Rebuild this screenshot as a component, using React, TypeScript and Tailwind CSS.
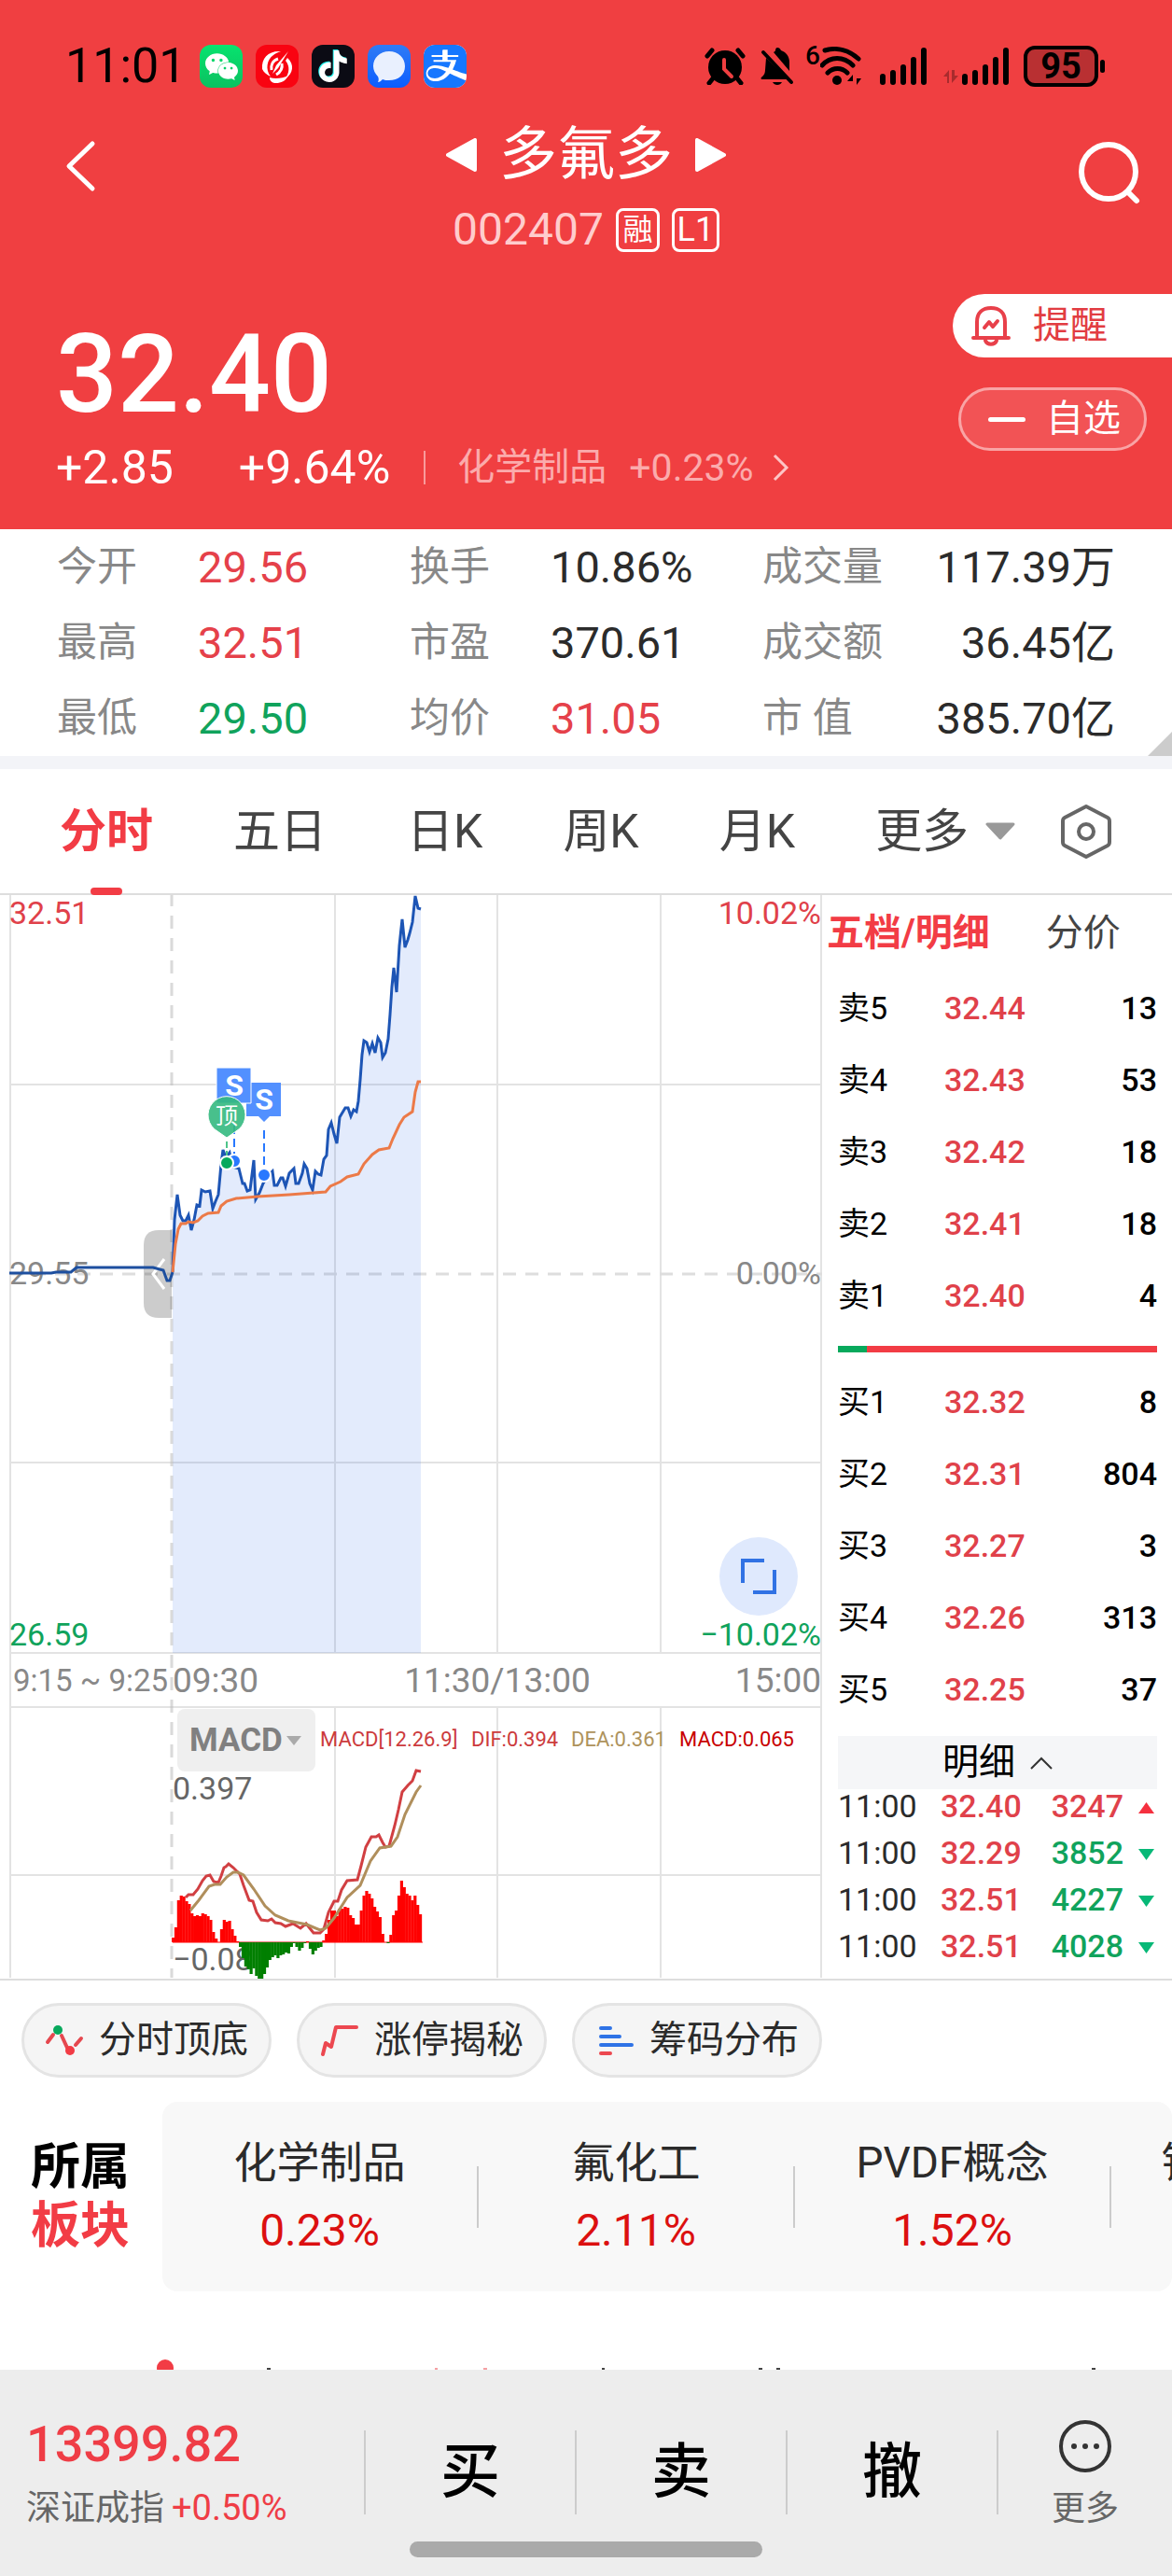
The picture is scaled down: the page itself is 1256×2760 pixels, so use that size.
import type { ReactNode } from 'react';
import { SiAlipay, SiTiktok, SiWechat } from 'react-icons/si';

const stats = [
  { label: '今开', value: '29.56', color: 'text-[#e5414a]' },
  { label: '换手', value: '10.86%', color: 'text-[#2b2b2b]' },
  { label: '成交量', value: '117.39万', color: 'text-[#2b2b2b]' },
  { label: '最高', value: '32.51', color: 'text-[#e5414a]' },
  { label: '市盈', value: '370.61', color: 'text-[#2b2b2b]' },
  { label: '成交额', value: '36.45亿', color: 'text-[#2b2b2b]' },
  { label: '最低', value: '29.50', color: 'text-[#10a35c]' },
  { label: '均价', value: '31.05', color: 'text-[#e5414a]' },
  { label: '市 值', value: '385.70亿', color: 'text-[#2b2b2b]' },
];

const tabs = ['分时', '五日', '日K', '周K', '月K'];

const asks = [
  ['卖5', '32.44', '13'],
  ['卖4', '32.43', '53'],
  ['卖3', '32.42', '18'],
  ['卖2', '32.41', '18'],
  ['卖1', '32.40', '4'],
];

const bids = [
  ['买1', '32.32', '8'],
  ['买2', '32.31', '804'],
  ['买3', '32.27', '3'],
  ['买4', '32.26', '313'],
  ['买5', '32.25', '37'],
];

const trades = [
  { time: '11:00', price: '32.40', volume: '3247', up: true },
  { time: '11:00', price: '32.29', volume: '3852', up: false },
  { time: '11:00', price: '32.51', volume: '4227', up: false },
  { time: '11:00', price: '32.51', volume: '4028', up: false },
];

const sectors = [
  { name: '化学制品', change: '0.23%' },
  { name: '氟化工', change: '2.11%' },
  { name: 'PVDF概念', change: '1.52%' },
  { name: '锂电池概念', change: '' },
];

const preMarket = '10,407 55,407 60,406 76,406 82,401 164,401 175,404 179,415 182,415 185,406';

const priceLine =
  '185,406 187,350 190,323 193,345 196,351 199,351 202,345 205,361 208,350 211,334 214,335 216,318 220,320 225,319 ' +
  '228,338 231,330 234,323 237,290 239,275 242,283 246,278 249,293 256,295 260,311 262,311 265,319 268,318 272,286 ' +
  '274,328 278,321 282,311 287,303 292,298 294,313 297,313 301,305 303,305 306,314 310,300 315,295 317,311 320,311 ' +
  '324,300 326,290 329,295 332,311 335,318 338,298 341,301 344,302 347,285 350,281 352,253 355,246 358,258 361,268 ' +
  '364,240 367,235 370,230 373,230 376,239 379,232 382,234 384,223 386,200 388,173 390,158 393,160 396,170 399,161 ' +
  '402,171 405,155 408,160 410,176 413,171 416,156 418,130 420,100 422,80 425,106 428,56 431,28 434,58 437,50 439,43 ' +
  '442,31 445,3 448,16 451,17';

const averageLine =
  '185,406 188,376 191,360 194,354 199,354 202,352 207,353 212,351 217,346 223,343 234,342 237,335 243,330 253,327 ' +
  '276,325 310,323 349,320 354,314 365,309 372,304 384,301 390,290 399,280 406,275 417,273 421,263 428,248 433,240 ' +
  '442,234 445,213 448,202 451,202';

const difLine =
  '199,1076 202,1073 207,1073 212,1067 217,1058 221,1053 225,1052 229,1059 234,1060 237,1053 240,1044 242,1043 ' +
  '245,1040 250,1044 257,1051 261,1063 267,1079 271,1080 275,1092 280,1100 287,1101 291,1099 295,1103 301,1104 ' +
  '306,1107 314,1104 322,1109 328,1104 332,1109 336,1114 343,1114 347,1110 352,1092 358,1080 362,1080 366,1068 ' +
  '372,1058 383,1057 387,1042 392,1022 398,1011 403,1011 406,1009 410,1017 413,1022 417,1021 423,999 427,982 ' +
  '431,963 437,956 442,951 446,940 451,941';

const deaLine =
  '204,1090 213,1079 224,1064 230,1062 236,1062 243,1054 250,1049 255,1049 261,1052 272,1067 284,1085 295,1095 ' +
  '309,1101 329,1105 343,1111 349,1109 358,1098 372,1076 386,1063 397,1037 407,1023 419,1021 426,1011 434,987 ' +
  '446,963 451,956';

const macdBars = [
  5, 16, 45, 50, 49, 44, 41, 31, 28, 29, 28, 31, 30, 28, 24, 11, 4, 0, 14, 24, 22, 23, 14, 7, 1, -5, -17, -26, -29,
  -34, -28, -36, -39, -39, -34, -27, -19, -16, -14, -17, -14, -13, -11, -12, -5, -1, -5, -9, -6, -1, 1, -7, -13, -9,
  -6, -5, 2, 9, 24, 34, 34, 28, 36, 36, 38, 37, 29, 26, 19, 19, 34, 50, 55, 52, 47, 38, 33, 27, 9, 0, -1, 8, 29, 34,
  50, 66, 59, 52, 50, 45, 50, 40, 30,
];

function AppIcon({ className, children }: { className: string; children: ReactNode }) {
  return (
    <span className={`flex h-[46px] w-[46px] items-center justify-center overflow-hidden rounded-xl ${className}`}>
      {children}
    </span>
  );
}

function Signal() {
  return (
    <svg width="50" height="40" viewBox="0 0 50 40" stroke="#000" strokeWidth="6" strokeLinecap="round">
      <path d="M3 31v6M14 27v10M25 21v16M36 13v24M47 3v34" />
    </svg>
  );
}

function StatusBar() {
  return (
    <div className="flex items-center justify-between pl-[70px] pr-[72px] pt-12">
      <div className="flex h-[46px] items-center gap-[14px]">
        <span className="w-[130px] text-[52px] leading-none text-black">11:01</span>
        <AppIcon className="bg-gradient-to-b from-[#07e36f] to-[#0ac160]">
          <SiWechat size={35} />
        </AppIcon>
        <AppIcon className="bg-[#f90311]">
          <svg width="46" height="46" viewBox="0 0 46 46" fill="#fff">
            <path d="M27 7C14 6 6 14 7 26c2 4 5 6 9 8-6-8-4-18 3-23 2-2 5-3 8-4z" />
            <path d="M34 14c8 7 6 17-2 22 4-6 5-13 0-19z" />
            <path d="M15 35c6 2 14 1 20-2-3 6-8 8-13 8-4 0-7-2-7-6z" />
            <path d="M35 7 24 25l-6 6 4-9z" />
            <path d="M24 15c-6 2-8 7-7 12M28 20c1 5-1 9-6 12" fill="none" stroke="#fff" strokeWidth="3" />
          </svg>
        </AppIcon>
        <AppIcon className="bg-[#0b0b14]">
          <SiTiktok size={34} className="drop-shadow-[-1px_-1px_0_#25f4ee]" />
        </AppIcon>
        <AppIcon className="bg-gradient-to-b from-[#2f7bf5] to-[#0a5cff]">
          <svg width="46" height="46" viewBox="0 0 46 46">
            <path d="M23 7c10 0 17 7 17 16s-7 15-17 15c-3 0-5 0-7-1-2 2-3 3-5 3 1-2 1-4 0-6-3-3-5-7-5-11C6 14 13 7 23 7z" fill="#e9f0fe" />
          </svg>
        </AppIcon>
        <AppIcon className="bg-white text-[#1677ff]">
          <SiAlipay size={48} className="shrink-0" />
        </AppIcon>
      </div>

      <div className="flex h-[46px] items-center">
        <svg width="44" height="40" viewBox="0 0 44 40" fill="none" stroke="#000" strokeLinecap="round">
          <circle cx="22" cy="21" r="18" fill="#000" stroke="none" />
          <path d="M3 9l5-6M41 9l-5-6" strokeWidth="5" />
          <path d="M9 33l-4 5M35 33l4 5" strokeWidth="5" />
          <path d="M21 13v10l8 8" stroke="#f03f41" strokeWidth="4" />
        </svg>
        <svg className="ml-4" width="36" height="42" viewBox="0 0 36 42">
          <path d="M18 1c2 0 3 1 4 3 6 2 9 7 9 13v9L14 6c1-1 2-1 2-2 0-2 1-3 2-3zM6 12l23 23H2c-2 0-2-2 0-3 2-2 3-4 3-7z" />
          <path d="M13 38h10c-2 4-8 4-10 0z" />
          <path d="M3 6l30 32" stroke="#000" strokeWidth="4" strokeLinecap="round" />
        </svg>
        <span className="ml-3 self-start text-[28px] font-medium leading-6 text-black">6</span>
        <svg width="46" height="42" viewBox="0 0 46 42" fill="none" stroke="#000" strokeWidth="5" strokeLinecap="round">
          <path d="M5 4c13-4 26 0 36 9M2 20c9-10 23-10 33 0M8 28c6-6 15-6 21 0" />
          <circle cx="18" cy="36" r="5" fill="#000" stroke="none" />
          <path d="M35 41V30l-6 7h6M39 30v11l5-7h-5" fill="#000" stroke="none" />
        </svg>
        <span className="ml-[18px]">
          <Signal />
        </span>
        <svg className="ml-[18px] self-end" width="16" height="20" viewBox="0 0 16 20" fill="#a92b2d">
          <path d="M6 15V1L0 8h4v7zM9 1v14l7-8h-4V1z" />
        </svg>
        <span className="ml-1">
          <Signal />
        </span>
        <span className="ml-4 flex h-11 w-[80px] items-center justify-center rounded-xl border-4 border-black bg-[#b93032] text-[38px] font-bold leading-none text-black">
          95
        </span>
        <span className="ml-[2px] h-[14px] w-[5px] rounded-full bg-black"></span>
      </div>
    </div>
  );
}

function Header() {
  return (
    <header className="bg-[#f03f41] pb-9 text-white">
      <StatusBar />

      <div className="mt-8 grid grid-cols-[1fr_auto_1fr]">
        <button aria-label="返回" className="ml-[68px] mt-6 justify-self-start self-start">
          <svg width="36" height="56" viewBox="0 0 36 56" fill="none" stroke="#fff" strokeWidth="5" strokeLinecap="round" strokeLinejoin="round">
            <path d="M31 4 6 28l25 24" />
          </svg>
        </button>
        <div className="flex flex-col items-center">
          <div className="flex h-20 items-center gap-6">
            <button aria-label="上一只">
              <svg width="33" height="36" viewBox="0 0 33 36" fill="#fff" stroke="#fff" strokeWidth="4" strokeLinejoin="round">
                <path d="M31 2v32L2 18z" />
              </svg>
            </button>
            <h1 className="text-[62px] leading-none">多氟多</h1>
            <button aria-label="下一只">
              <svg width="33" height="36" viewBox="0 0 33 36" fill="#fff" stroke="#fff" strokeWidth="4" strokeLinejoin="round">
                <path d="M2 2v32l29-16z" />
              </svg>
            </button>
          </div>
          <div className="mt-[10px] flex h-[60px] items-center gap-[13px] text-[32px] leading-none">
            <span className="text-[48px] text-[#ffcccd]">002407</span>
            <span className="flex h-[47px] w-[47px] items-center justify-center rounded-lg border-[3px]">融</span>
            <span className="flex h-[47px] w-[51px] items-center justify-center rounded-lg border-[3px] text-[36px]">L1</span>
          </div>
        </div>
        <button aria-label="搜索" className="mr-[33px] mt-6 justify-self-end self-start">
          <svg width="68" height="70" viewBox="0 0 68 70" fill="none" stroke="#fff" strokeWidth="6" strokeLinecap="round">
            <circle cx="33" cy="34" r="29" />
            <path d="M54 56l9 9" />
          </svg>
        </button>
      </div>

      <div className="mt-[39px] flex justify-between">
        <div className="pt-7">
          <p className="pl-[60px] text-[116px] font-medium leading-none">32.40</p>
          <div className="mt-3 flex h-[60px] items-center pl-[60px] text-[50px] leading-none">
            <span>+2.85</span>
            <span className="ml-[70px]">+9.64%</span>
            <span className="ml-9 h-9 w-[2px] bg-[#f99a9b]"></span>
            <a href="#sector" className="ml-[34px] flex items-center text-[40px] text-[#fbabac]">
              化学制品<span className="ml-6 text-[41px]">+0.23%</span>
              <svg className="ml-5" width="18" height="32" viewBox="0 0 18 32" fill="none" stroke="#fdc5c6" strokeWidth="3">
                <path d="M2 3l13 13L2 29" />
              </svg>
            </a>
          </div>
        </div>
        <div className="flex flex-col items-end gap-8 text-[40px] leading-none">
          <button className="flex h-[68px] w-[235px] items-center gap-6 rounded-l-full bg-white pl-5 text-[#e23c42]">
            <svg width="42" height="44" viewBox="0 0 42 44" fill="none" stroke="#e8404a" strokeWidth="4" strokeLinecap="round" strokeLinejoin="round">
              <path d="M6 34V18C6 8 12 3 21 3s15 5 15 15v16M2 35h38" />
              <path d="M15 38c2 5 10 5 12 0M14 24l5-6 4 5 5-6" />
            </svg>
            提醒
          </button>
          <button className="mr-[27px] flex h-[68px] w-[202px] items-center justify-between rounded-full border-[3px] border-[#f9a4a5] bg-[#f25355] pl-[29px] pr-[25px]">
            <span className="h-[5px] w-10 rounded-full bg-white"></span>
            自选
          </button>
        </div>
      </div>
    </header>
  );
}

function Stats() {
  return (
    <section className="relative border-b-[14px] border-[#f3f4f8] bg-white px-[61px]">
      <dl className="grid grid-cols-3">
        {stats.map((stat, index) => (
          <div key={stat.label} className="flex h-[81px] items-center leading-none">
            <dt className="w-[151px] shrink-0 text-[43px] text-[#888]">{stat.label}</dt>
            <dd className={`text-[47px] ${stat.color} ${index % 3 === 2 ? 'ml-auto' : ''}`}>{stat.value}</dd>
          </div>
        ))}
      </dl>
      <svg className="absolute bottom-0 right-0" width="26" height="26" viewBox="0 0 26 26">
        <path d="M26 0v26H0z" fill="#ccc" />
      </svg>
    </section>
  );
}

function PeriodTabs() {
  return (
    <nav className="flex h-[133px] items-center gap-[86px] bg-white px-16 text-[50px] leading-none text-[#444]">
      {tabs.map((tab, index) => (
        <button
          key={tab}
          className={`relative h-full shrink-0 ${index === 0 ? 'font-bold text-[#f23c45]' : ''}`}
        >
          {tab}
          {index === 0 && <span className="absolute -bottom-[2px] left-1/2 z-10 h-2 w-[34px] -translate-x-1/2 rounded-full bg-[#f23c45]"></span>}
        </button>
      ))}
      <button className="flex shrink-0 items-center gap-[18px]">
        更多
        <svg width="32" height="20" viewBox="0 0 32 20" fill="#999" stroke="#999" strokeWidth="3" strokeLinejoin="round">
          <path d="M2 2h28L16 17z" />
        </svg>
      </button>
      <button aria-label="设置" className="-ml-[38px]">
        <svg width="56" height="60" viewBox="0 0 56 60" fill="none" stroke="#666" strokeWidth="4" strokeLinejoin="round">
          <path d="M28 3 51 15q2 1 2 4v22q0 3-2 4L28 57 5 45q-2-1-2-4V19q0-3 2-4z" />
          <circle cx="28" cy="30" r="8" />
        </svg>
      </button>
    </nav>
  );
}

function Chart() {
  return (
    <div className="relative min-w-0 flex-1">
      <svg className="block h-auto w-full" viewBox="0 2 881 1161" fontSize="34" fill="none">
        <g stroke="#e3e3e3" strokeWidth="2">
          <path d="M11 0v1162M359 0v814M533 0v814M708 0v814M880 0v1162" />
          <path d="M359 872v290M533 872v290M708 872v290" />
          <path d="M11 205h870M11 610h870M11 814h870M11 872h870M11 1052h870" />
        </g>
        <path d="M11 408h870" stroke="#ddd" strokeWidth="3" strokeDasharray="14 10" />
        <polygon points={`${priceLine} 451,814 185,814`} fill="#2563eb" fillOpacity="0.13" />
        <path d="M184 0v1162" stroke="#bbb" strokeOpacity="0.55" strokeWidth="3" strokeDasharray="14 10" />

        <g fill="#888">
          <text x="10" y="419">29.55</text>
          <text x="880" y="419" textAnchor="end">0.00%</text>
          <text x="14" y="855" fontSize="33">9:15 ~ 9:25</text>
          <text x="185" y="856" fontSize="37">09:30</text>
          <text x="533" y="856" fontSize="37" textAnchor="middle">11:30/13:00</text>
          <text x="880" y="856" fontSize="37" textAnchor="end">15:00</text>
        </g>
        <g fill="#e0414a">
          <text x="10" y="33">32.51</text>
          <text x="880" y="33" textAnchor="end">10.02%</text>
        </g>
        <g fill="#10a35c">
          <text x="10" y="806">26.59</text>
          <text x="880" y="806" textAnchor="end">−10.02%</text>
        </g>

        <path d="M184 361h-14q-16 0-16 16v62q0 16 16 16h14z" fill="#000" fillOpacity="0.2" />
        <path d="M176 392l-12 16 12 16" stroke="#fff" strokeWidth="3" />
        <polyline points={preMarket} stroke="#1d4f9f" strokeWidth="3" />
        <polyline points={priceLine} stroke="#1d55b5" strokeWidth="3" />
        <polyline points={averageLine} stroke="#ec7a48" strokeWidth="3" />

        {/* trade signals */}
        <path d="M251 249v34M283 254v40" stroke="#2878ff" strokeWidth="2" strokeDasharray="9 5" />
        <path d="M243 266v20" stroke="#4ec48a" strokeWidth="2" strokeDasharray="7 3" />
        <g stroke="#fff" strokeWidth="2">
          <circle cx="251" cy="287" r="7" fill="#2878ff" />
          <circle cx="283" cy="302" r="7" fill="#2878ff" />
          <circle cx="243" cy="289" r="7" fill="#07a95c" />
        </g>
        <path d="M264 203h37v36h-12l-6 6-6-6h-13z" fill="#5290ff" />
        <path d="M232 187h37v38h-37z" fill="#5290ff" stroke="#fff" />
        <path d="M243 262l-10-7a20 20 0 1 1 20 0z" fill="#34b97f" fillOpacity="0.9" stroke="#fff" />
        <g fill="#fff" textAnchor="middle">
          <text x="251" y="217" fontSize="32" fontWeight="700">S</text>
          <text x="283" y="232" fontSize="32" fontWeight="700">S</text>
          <text x="243" y="247" fontSize="24">顶</text>
        </g>

        {/* MACD */}
        <g fontSize="22">
          <text x="343" y="914" fill="#cc3b3d">MACD[12.26.9]</text>
          <text x="505" y="914" fill="#cc3b3d">DIF:0.394</text>
          <text x="612" y="914" fill="#ae935c">DEA:0.361</text>
          <text x="728" y="914" fill="#c80000">MACD:0.065</text>
        </g>
        <g fill="#666">
          <text x="185" y="971">0.397</text>
          <text x="185" y="1154">−0.08</text>
        </g>
        <path d="M185 1124h268" stroke="#f00" strokeWidth="1" />
        {macdBars.map((value, index) => (
          <rect
            key={index}
            x={184 + index * 2.88}
            y={value > 0 ? 1124 - value : 1124}
            width="3.2"
            height={Math.abs(value)}
            fill={value > 0 ? '#ff0000' : '#007f00'}
          />
        ))}
        <polyline points={difLine} stroke="#d13f42" strokeWidth="3" />
        <polyline points={deaLine} stroke="#b08f5c" strokeWidth="3" />
      </svg>

      <label className="absolute left-[190px] top-[872px] flex h-[67px] w-[148px] items-center rounded-lg bg-[#efefef]">
        <select aria-label="指标" className="w-full appearance-none pl-[13px] text-[35px] font-bold leading-none text-[#808080]">
          <option>MACD</option>
        </select>
        <svg className="pointer-events-none absolute right-[15px]" width="16" height="10" viewBox="0 0 16 10">
          <path d="M0 0h16L8 10z" fill="#aaa" />
        </svg>
      </label>
      <button
        aria-label="全屏"
        className="absolute right-[26px] top-[688px] flex h-[84px] w-[84px] items-center justify-center rounded-full bg-[#dfe9fd]"
      >
        <svg width="40" height="40" viewBox="0 0 40 40" fill="none" stroke="#3172e4" strokeWidth="4">
          <path d="M3 27V3h23M37 13v24H14" />
        </svg>
      </button>
    </div>
  );
}

function Book({ rows }: { rows: string[][] }) {
  return (
    <table className="w-full text-[34px] leading-none text-black">
      <tbody>
        {rows.map(([side, price, amount]) => (
          <tr key={side} className="h-[77px]">
            <td className="w-[114px] p-0">{side}</td>
            <td className="p-0 font-medium text-[#e0414a]">{price}</td>
            <td className="p-0 text-right font-medium">{amount}</td>
          </tr>
        ))}
      </tbody>
    </table>
  );
}

function OrderPanel() {
  return (
    <aside className="w-[375px] shrink-0 pl-[17px] pr-4">
      <div className="-ml-3 flex h-[82px] items-center text-[40px] leading-none">
        <button className="font-bold text-[#f23c45]">五档/明细</button>
        <button className="ml-[60px] text-[#444]">分价</button>
      </div>
      <Book rows={asks} />
      <div className="mb-[14px] mt-4 flex h-[7px] bg-[#f23c45]">
        <span className="w-[9%] bg-[#07a95c]"></span>
      </div>
      <Book rows={bids} />
      <button className="mt-3 flex h-[57px] w-full items-center justify-center gap-4 bg-[#f5f6f8] text-[39px] leading-none text-black">
        明细
        <svg width="24" height="14" viewBox="0 0 24 14" fill="none" stroke="#333" strokeWidth="2">
          <path d="M1 13 12 2l11 11" />
        </svg>
      </button>
      <table className="w-full text-[34px] leading-9">
        <tbody>
          {trades.map((trade, index) => (
            <tr key={index} className="h-[50px] align-top">
              <td className="w-[110px] p-0 text-[#2b2b2b]">{trade.time}</td>
              <td className="p-0 font-medium text-[#e0414a]">{trade.price}</td>
              <td className={`p-0 text-right font-medium ${trade.up ? 'text-[#e0414a]' : 'text-[#10a35c]'}`}>{trade.volume}</td>
              <td className="w-[36px] p-0">
                <svg className="ml-auto mr-[3px] mt-[14px]" width="17" height="12" viewBox="0 0 17 12">
                  {trade.up ? <path d="M0 12h17L8.500 0z" fill="#f5303f" /> : <path d="M0 0h17L8.500 12z" fill="#07b877" />}
                </svg>
              </td>
            </tr>
          ))}
        </tbody>
      </table>
    </aside>
  );
}

function Tools() {
  return (
    <div className="flex gap-[27px] px-[23px] pt-6 text-[40px] leading-none text-[#2b2b2b]">
      <button className="flex h-20 w-[268px] items-center justify-center gap-4 rounded-full border-[3px] border-[#e4e4e4] bg-[#f5f5f5]">
        <svg width="42" height="34" viewBox="0 0 42 34" fill="none" strokeLinecap="round">
          <path d="M3 19l6-8M18 12l6 13M33 22l6-7" stroke="#e5484f" strokeWidth="4" />
          <circle cx="14" cy="6" r="5" fill="#07a95c" />
          <circle cx="27" cy="28" r="5" fill="#f23c45" />
        </svg>
        分时顶底
      </button>
      <button className="flex h-20 w-[268px] items-center justify-center gap-4 rounded-full border-[3px] border-[#e4e4e4] bg-[#f5f5f5]">
        <svg width="42" height="34" viewBox="0 0 42 34" fill="none" stroke="#ec4850" strokeWidth="4" strokeLinecap="round" strokeLinejoin="round">
          <path d="M3 32 6 20l6 4 5-21h22" />
        </svg>
        涨停揭秘
      </button>
      <button className="flex h-20 w-[268px] items-center justify-center gap-4 rounded-full border-[3px] border-[#e4e4e4] bg-[#f5f5f5]">
        <svg width="42" height="34" viewBox="0 0 42 34" stroke="#2f73e6" strokeWidth="4" strokeLinecap="round">
          <path d="M6 4h10M6 13h20M6 22h33" />
          <path d="M6 31h10" stroke="#ec4850" />
        </svg>
        筹码分布
      </button>
    </div>
  );
}

function Sectors() {
  return (
    <section id="sector" className="mt-[26px] flex items-center overflow-hidden">
      <h2 className="w-[174px] shrink-0 pl-[33px] text-[53px] font-bold leading-[63px] text-black">
        所属
        <br />
        <span className="text-[#f23c45]">板块</span>
      </h2>
      <ul className="flex h-[203px] min-w-0 flex-1 items-center overflow-hidden rounded-2xl bg-[#f8f8f8]">
        {sectors.map((sector) => (
          <li key={sector.name} className="flex w-[339px] shrink-0 items-center leading-none">
            <a href="#sector" className="flex h-[120px] flex-1 flex-col items-center gap-[26px]">
              <span className="whitespace-nowrap text-[46px] text-[#2b2b2b]">{sector.name}</span>
              <span className="text-[48px] text-[#dc1010]">{sector.change}</span>
            </a>
            <span className="h-[66px] w-[2px] bg-[#ccc]"></span>
          </li>
        ))}
      </ul>
    </section>
  );
}

function BottomBar() {
  return (
    <footer className="bg-[#ededed] pb-5 pt-[46px]">
      <div className="flex h-[128px] items-center">
        <a href="#index" className="w-[390px] pl-7 leading-none text-[#ef3d46]">
          <span className="block text-[54px] font-medium">13399.82</span>
          <span className="mt-[22px] flex items-center gap-2 text-[38px]">
            <span className="text-[37px] text-[#666]">深证成指</span>+0.50%
          </span>
        </a>
        {['买', '卖', '撤'].map((action) => (
          <button
            key={action}
            className="flex h-[90px] flex-1 items-center justify-center border-l-2 border-[#ccc] text-[64px] font-medium leading-none text-black"
          >
            {action}
          </button>
        ))}
        <button className="flex h-[90px] w-[188px] flex-col items-center justify-center gap-5 border-l-2 border-[#ccc] text-[36px] leading-none text-[#666]">
          <svg width="58" height="58" viewBox="0 0 58 58" className="shrink-0">
            <circle cx="29" cy="29" r="26" fill="none" stroke="#333" strokeWidth="4" />
            <circle cx="17" cy="29" r="3" fill="#333" />
            <circle cx="29" cy="29" r="3" fill="#333" />
            <circle cx="41" cy="29" r="3" fill="#333" />
          </svg>
          更多
        </button>
      </div>
      <div className="mx-auto mt-[10px] h-[17px] w-[378px] rounded-full bg-[#aaa]"></div>
    </footer>
  );
}

export default function App() {
  return (
    <div className="min-h-screen w-full overflow-hidden bg-white font-['Roboto','Noto_Sans_CJK_SC',sans-serif]">
      <Header />
      <Stats />
      <PeriodTabs />
      <main>
        <div className="flex border-b-2 border-t-2 border-[#ddd]">
          <Chart />
          <OrderPanel />
        </div>
        <Tools />
        <Sectors />
        {/* top edge of the news tabs, the rest runs under the bottom bar */}
        <svg className="mt-[73px] block w-full" height="11" viewBox="0 0 1256 11" preserveAspectRatio="xMinYMin slice">
          <circle cx="177" cy="9" r="9" fill="#f23c45" />
          <path d="M286 10h4M645 10h3M813 10h4M832 10h4M1170 10h4" stroke="#444" strokeWidth="2" />
          <path d="M466 10h3M518 10h4" stroke="#f5a0a4" strokeWidth="2" />
        </svg>
      </main>
      <BottomBar />
    </div>
  );
}
